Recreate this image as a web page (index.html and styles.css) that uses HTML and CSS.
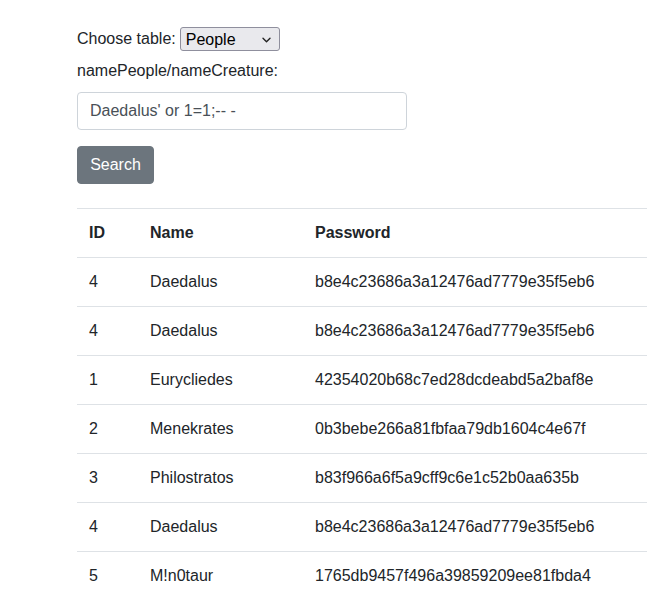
FILE: index.html
```html
<!DOCTYPE html>
<html>
<head>
<meta charset="utf-8">
<link rel="stylesheet" href="styles.css">
</head>
<body>
<div class="page">
  <form class="search-form">
    <div class="row-choose">
      <label for="tbl">Choose table:</label>
      <span class="select-wrap">
        <select id="tbl" class="table-select">
          <option>People</option>
          <option>Creatures</option>
        </select>
        <svg class="chevron" width="9" height="6" viewBox="0 0 9 6"><path d="M1 1.2l3.5 3.5 3.5-3.5" fill="none" stroke="#222" stroke-width="1.4" stroke-linecap="round" stroke-linejoin="round"/></svg>
      </span>
    </div>
    <label class="name-label" for="q">namePeople/nameCreature:</label>
    <input id="q" class="text-input" type="text" value="Daedalus' or 1=1;-- -">
    <button type="button" class="btn-search">Search</button>
  </form>
  <table class="data-table">
    <tr><th class="c-id">ID</th><th class="c-name">Name</th><th>Password</th></tr>
    <tr><td>4</td><td>Daedalus</td><td>b8e4c23686a3a12476ad7779e35f5eb6</td></tr>
    <tr><td>4</td><td>Daedalus</td><td>b8e4c23686a3a12476ad7779e35f5eb6</td></tr>
    <tr><td>1</td><td>Eurycliedes</td><td>42354020b68c7ed28dcdeabd5a2baf8e</td></tr>
    <tr><td>2</td><td>Menekrates</td><td>0b3bebe266a81fbfaa79db1604c4e67f</td></tr>
    <tr><td>3</td><td>Philostratos</td><td>b83f966a6f5a9cff9c6e1c52b0aa635b</td></tr>
    <tr><td>4</td><td>Daedalus</td><td>b8e4c23686a3a12476ad7779e35f5eb6</td></tr>
    <tr><td>5</td><td>M!n0taur</td><td>1765db9457f496a39859209ee81fbda4</td></tr>
  </table>
</div>
</body>
</html>
```
FILE: styles.css
```css
html, body {
  margin: 0;
  padding: 0;
  background: #fff;
}
body {
  font-family: "Liberation Sans", Arial, sans-serif;
  font-size: 16px;
  line-height: 24px;
  color: #212529;
  overflow: hidden;
}
.page {
  padding: 27px 0 0 77px;
}
.search-form {
  display: flex;
  flex-direction: column;
  align-items: flex-start;
}
.row-choose {
  display: flex;
  align-items: center;
  gap: 4px;
  height: 24px;
}
.select-wrap {
  position: relative;
  display: inline-flex;
}
.table-select {
  -webkit-appearance: none;
  appearance: none;
  box-sizing: border-box;
  width: 100px;
  height: 24px;
  padding: 1px 0 0 5px;
  font-family: "Liberation Sans", Arial, sans-serif;
  font-size: 16px;
  line-height: 21px;
  color: #000;
  background: #e9e9ed;
  border: 1px solid #8f8f9d;
  border-radius: 3px;
  margin: 0;
  outline: none;
}
.chevron {
  position: absolute;
  right: 9px;
  top: 10px;
  pointer-events: none;
}
.name-label {
  margin-top: 8px;
  margin-bottom: 9px;
}
.text-input {
  box-sizing: border-box;
  width: 330px;
  height: 38px;
  padding: 6px 12px;
  font-family: "Liberation Sans", Arial, sans-serif;
  font-size: 16px;
  color: #495057;
  border: 1px solid #ced4da;
  border-radius: 4px;
  background: #fff;
  margin: 0 0 16px 0;
  outline: none;
}
.btn-search {
  box-sizing: border-box;
  height: 38px;
  width: 77px;
  padding: 6px 12px;
  font-family: "Liberation Sans", Arial, sans-serif;
  font-size: 16px;
  color: #fff;
  background: #6c757d;
  border: 1px solid #6c757d;
  border-radius: 4px;
  margin: 0;
}
.data-table {
  margin-top: 24px;
  width: 100%;
  min-width: 570px;
  border-collapse: collapse;
}
.data-table th,
.data-table td {
  text-align: left;
  padding: 12px;
  border-top: 1px solid #dee2e6;
  vertical-align: top;
}
.data-table th {
  font-weight: bold;
}
.c-id {
  width: 37px;
}
.c-name {
  width: 141px;
}
```
